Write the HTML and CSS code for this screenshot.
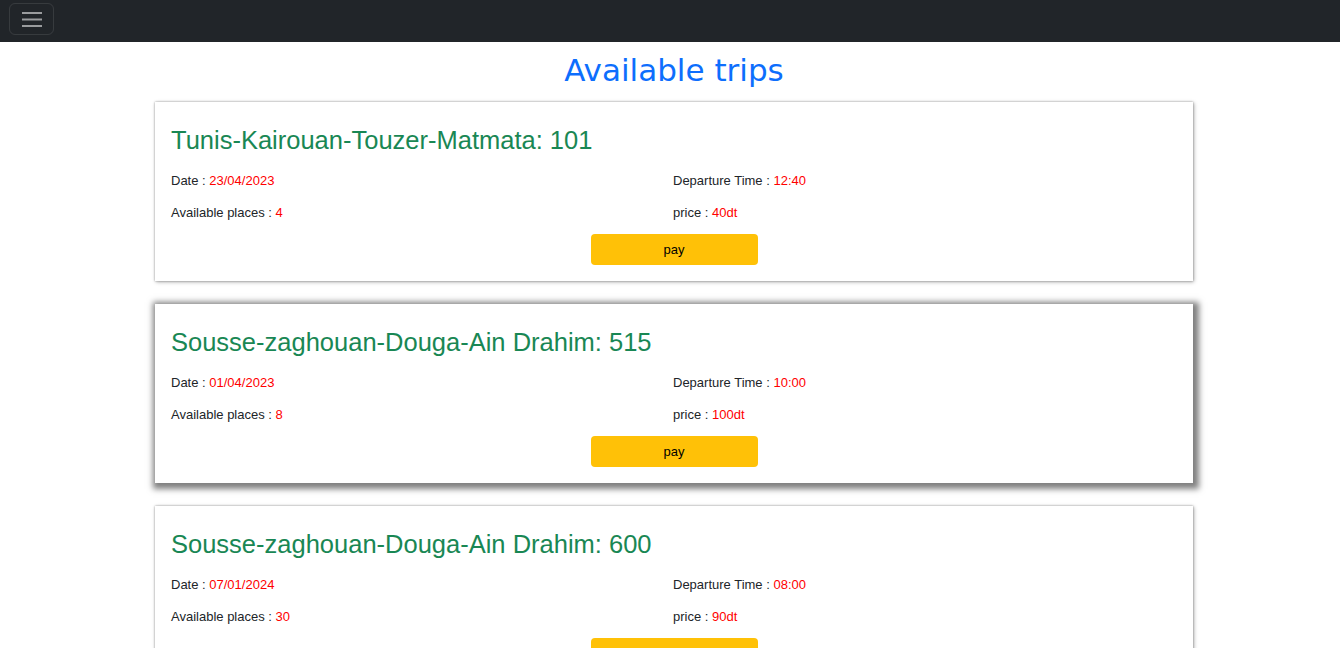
FILE: index.html
```html
<!DOCTYPE html>
<html lang="en">
<head>
<meta charset="utf-8">
<title>Available trips</title>
<link rel="stylesheet" href="styles.css">
</head>
<body>
<nav class="navbar">
  <button class="toggler" type="button" aria-label="Toggle navigation">
    <svg width="20" height="16" viewBox="0 0 20 16" aria-hidden="true">
      <path d="M0 2h20M0 8.5h20M0 15h20" stroke="rgba(255,255,255,0.55)" stroke-width="2" fill="none"/>
    </svg>
  </button>
</nav>
<main class="main">
  <h1 class="page-title">Available trips</h1>

  <div class="trip-card">
    <h3 class="trip-title">Tunis-Kairouan-Touzer-Matmata: 101</h3>
    <div class="trip-info">
      <div>Date : <span class="val">23/04/2023</span></div>
      <div>Departure Time : <span class="val">12:40</span></div>
      <div>Available places : <span class="val">4</span></div>
      <div>price : <span class="val">40dt</span></div>
    </div>
    <button class="pay-btn" type="button">pay</button>
  </div>

  <div class="trip-card trip-card-hover">
    <h3 class="trip-title">Sousse-zaghouan-Douga-Ain Drahim: 515</h3>
    <div class="trip-info">
      <div>Date : <span class="val">01/04/2023</span></div>
      <div>Departure Time : <span class="val">10:00</span></div>
      <div>Available places : <span class="val">8</span></div>
      <div>price : <span class="val">100dt</span></div>
    </div>
    <button class="pay-btn" type="button">pay</button>
  </div>

  <div class="trip-card">
    <h3 class="trip-title">Sousse-zaghouan-Douga-Ain Drahim: 600</h3>
    <div class="trip-info">
      <div>Date : <span class="val">07/01/2024</span></div>
      <div>Departure Time : <span class="val">08:00</span></div>
      <div>Available places : <span class="val">30</span></div>
      <div>price : <span class="val">90dt</span></div>
    </div>
    <button class="pay-btn" type="button">pay</button>
  </div>
</main>
</body>
</html>
```
FILE: styles.css
```css
html {
  scrollbar-width: none;
}
html::-webkit-scrollbar {
  display: none;
}
body {
  margin: 0;
  background: #fff;
  font-family: "Liberation Sans", Arial, sans-serif;
  color: #212529;
}
.navbar {
  height: 42px;
  box-sizing: border-box;
  background: #212529;
  padding: 3px 0 0 9px;
}
.toggler {
  width: 45px;
  height: 32px;
  box-sizing: border-box;
  background: transparent;
  border: 1px solid rgba(255, 255, 255, 0.1);
  border-radius: 6px;
  display: flex;
  align-items: center;
  justify-content: center;
  padding: 0;
}
.main {
  padding-left: 8px;
  padding-bottom: 40px;
}
.page-title {
  margin: 8px 0 12px;
  text-align: center;
  font-family: "DejaVu Sans", Verdana, sans-serif;
  font-weight: normal;
  font-size: 31px;
  line-height: 40px;
  color: #0d6efd;
}
.trip-card {
  width: 1038px;
  box-sizing: border-box;
  margin: 0 auto 23px;
  padding: 16px;
  background: #fff;
  box-shadow: 0 0 2px rgba(0, 0, 0, 0.35), 1px 1px 4px rgba(0, 0, 0, 0.3);
}
.trip-card-hover {
  box-shadow: 2px 2px 6px 4px rgba(0, 0, 0, 0.5);
}
.trip-title {
  margin: 0 0 9px;
  font-weight: normal;
  font-size: 25.5px;
  line-height: 44px;
  color: #198754;
}
.trip-info {
  display: grid;
  grid-template-columns: 502px 1fr;
  row-gap: 12px;
  font-size: 13px;
  line-height: 20px;
}
.val {
  color: #ff0000;
}
.pay-btn {
  display: block;
  width: 167px;
  height: 31px;
  margin: 11px auto 0;
  padding: 0;
  border: none;
  border-radius: 4px;
  background: #ffc107;
  color: #000;
  font-family: "Liberation Sans", Arial, sans-serif;
  font-size: 13px;
}
```
